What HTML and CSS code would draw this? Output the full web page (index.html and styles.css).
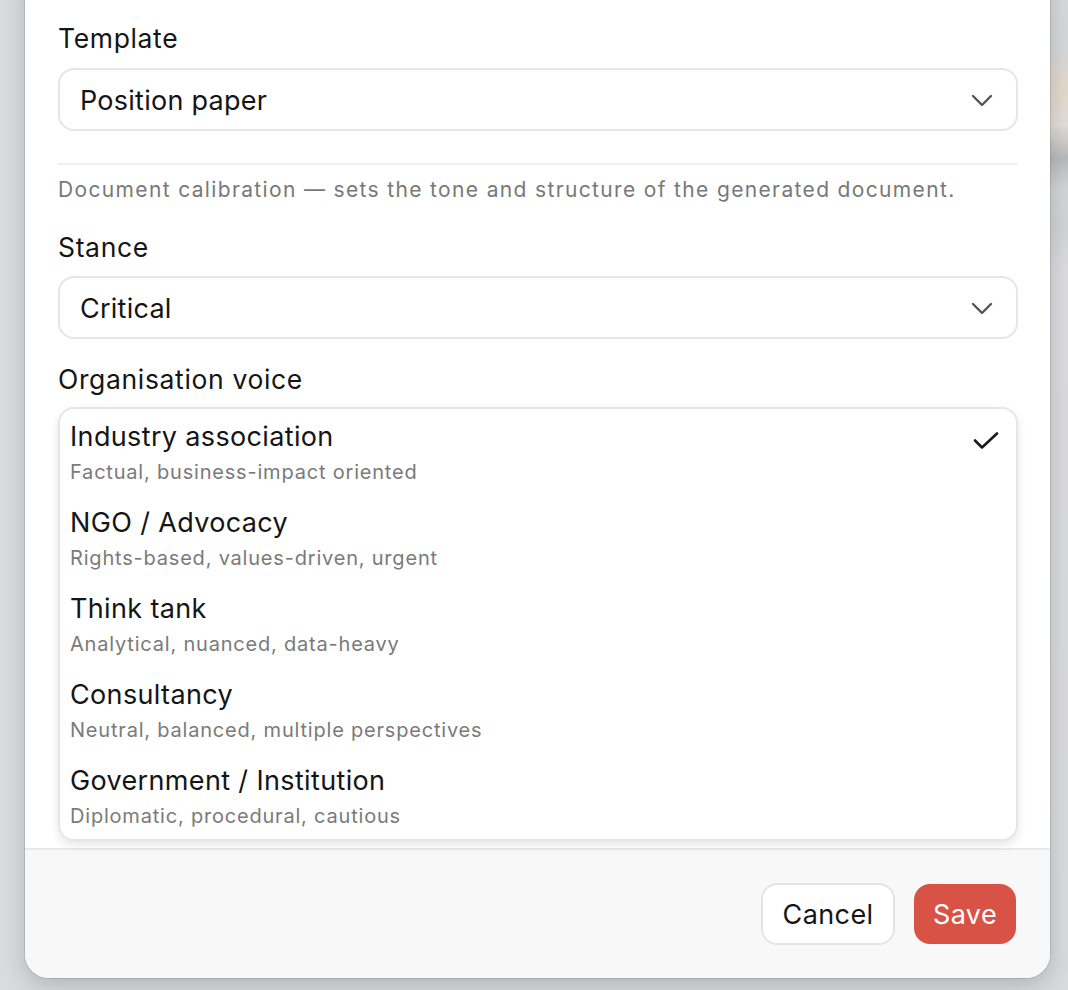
FILE: index.html
```html
<!DOCTYPE html>
<html lang="en">
<head>
    <meta charset="UTF-8">
    <meta name="viewport" content="width=device-width, initial-scale=1.0">
    <title>Document settings</title>
    <link rel="stylesheet" href="styles.css">
</head>
<body>
    <div class="modal">
        <div class="modal-body">
            <label class="field-label">Template</label>
            <div class="select">
                <span>Position paper</span>
                <svg class="chevron" width="22" height="14" viewBox="0 0 22 14"><path d="M2 2 L11 11 L20 2" fill="none" stroke="#555" stroke-width="2.4" stroke-linecap="round" stroke-linejoin="round"/></svg>
            </div>

            <hr class="divider">
            <p class="hint">Document calibration — sets the tone and structure of the generated document.</p>

            <label class="field-label stance">Stance</label>
            <div class="select">
                <span>Critical</span>
                <svg class="chevron" width="22" height="14" viewBox="0 0 22 14"><path d="M2 2 L11 11 L20 2" fill="none" stroke="#555" stroke-width="2.4" stroke-linecap="round" stroke-linejoin="round"/></svg>
            </div>

            <label class="field-label voice">Organisation voice</label>
            <ul class="options">
                <li class="option selected">
                    <div class="option-text">
                        <div class="option-title">Industry association</div>
                        <div class="option-desc">Factual, business-impact oriented</div>
                    </div>
                    <svg class="check" width="26" height="20" viewBox="0 0 26 20"><path d="M2 9.5 L9 16.5 L24 2.5" fill="none" stroke="#1a1a1a" stroke-width="2.6" stroke-linecap="round" stroke-linejoin="round"/></svg>
                </li>
                <li class="option">
                    <div class="option-text">
                        <div class="option-title">NGO / Advocacy</div>
                        <div class="option-desc">Rights-based, values-driven, urgent</div>
                    </div>
                </li>
                <li class="option">
                    <div class="option-text">
                        <div class="option-title">Think tank</div>
                        <div class="option-desc">Analytical, nuanced, data-heavy</div>
                    </div>
                </li>
                <li class="option">
                    <div class="option-text">
                        <div class="option-title">Consultancy</div>
                        <div class="option-desc">Neutral, balanced, multiple perspectives</div>
                    </div>
                </li>
                <li class="option">
                    <div class="option-text">
                        <div class="option-title">Government / Institution</div>
                        <div class="option-desc">Diplomatic, procedural, cautious</div>
                    </div>
                </li>
            </ul>
        </div>

        <div class="modal-footer">
            <button class="btn btn-cancel">Cancel</button>
            <button class="btn btn-save">Save</button>
        </div>
    </div>
</body>
</html>
```

FILE: styles.css
```css
body {
    margin: 0;
    padding: 0;
    font-family: 'Inter', 'Noto Sans', sans-serif;
    background-color: #dadbdd;
    background-image: linear-gradient(to bottom, #d8d9db 0, #d6d7d9 50px, #e3d9cc 90px, #e2ddd8 125px, #b9babc 158px, #d4d5d7 190px, #d2d3d5 230px, #dcdcde 270px, #d9dadc 100%);
    background-repeat: no-repeat;
    background-position: right top;
    background-size: 18px 100%;
    color: #151515;
    height: 990px;
    overflow: hidden;
}
.modal {
    width: 1025px;
    margin: -40px 0 0 25px;
    background: white;
    border-radius: 24px;
    overflow: hidden;
    box-shadow: 0 0 0 1px rgba(0, 0, 0, 0.1), 0 8px 24px rgba(0, 0, 0, 0.18);
}
.modal-body {
    padding: 61px 32px 7px 33px;
    display: flex;
    flex-direction: column;
}
.field-label {
    display: block;
    font-size: 26.5px;
    line-height: 34px;
    font-weight: 400;
    margin-bottom: 13px;
    letter-spacing: 0.65px;
}
.field-label.stance {
    margin-top: 26px;
    margin-bottom: 12px;
}
.field-label.voice {
    margin-top: 23px;
    margin-bottom: 11px;
}
.select {
    height: 63px;
    box-sizing: border-box;
    border: 2px solid #e6e6e6;
    border-radius: 16px;
    display: flex;
    align-items: center;
    justify-content: space-between;
    padding: 2px 23px 0 20px;
    font-size: 27px;
    letter-spacing: 0.25px;
}
.chevron {
    display: block;
}
.divider {
    border: none;
    border-top: 2px solid #f0f0f0;
    margin: 32px 0 0;
}
.hint {
    margin: 11px 0 0;
    font-size: 21px;
    line-height: 28px;
    color: #787878;
    letter-spacing: 1.35px;
}
.options {
    list-style: none;
    margin: 0;
    padding: 0;
    border: 2px solid #e6e6e6;
    border-radius: 16px;
    box-shadow: 0 4px 10px rgba(0, 0, 0, 0.1);
}
.option {
    display: flex;
    justify-content: space-between;
    align-items: flex-start;
    padding: 10px 17px 9px 10px;
}
.option-title {
    font-size: 27px;
    line-height: 36px;
    letter-spacing: 0.35px;
    margin-bottom: 3px;
}
.option-desc {
    font-size: 20px;
    line-height: 28px;
    color: #7a7a7a;
    letter-spacing: 0.8px;
}
.check {
    display: block;
    margin-top: 12px;
}
.modal-footer {
    height: 128px;
    border-top: 2px solid #e9e9e9;
    background: #f8f8f8;
    display: flex;
    align-items: center;
    justify-content: flex-end;
    gap: 19px;
    padding: 0 34px;
}
.btn {
    height: 62px;
    box-sizing: border-box;
    border-radius: 16px;
    font-family: inherit;
    font-size: 27px;
    padding: 0;
    cursor: pointer;
    letter-spacing: 0.4px;
}
.btn-cancel {
    background: white;
    border: 2px solid #e4e4e4;
    color: #151515;
    width: 134px;
}
.btn-save {
    background: #d85346;
    border: 2px solid #d85346;
    color: white;
    width: 102px;
    height: 60px;
}
```
